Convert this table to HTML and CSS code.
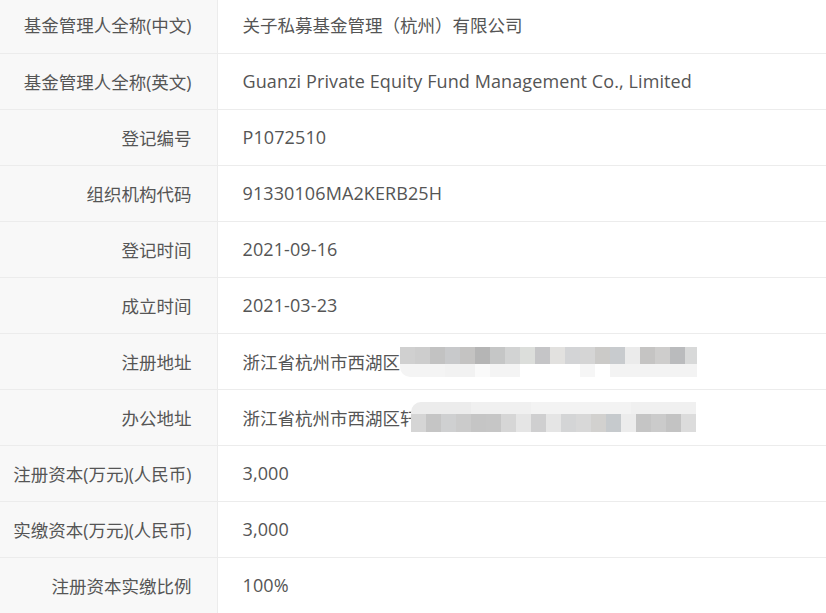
FILE: index.html
```html
<!DOCTYPE html>
<html lang="zh-CN">
<head>
  <meta charset="UTF-8" />
  <meta name="viewport" content="width=device-width, initial-scale=1.0" />
  <title>基金管理人信息</title>
  <link rel="stylesheet" href="styles.css">
</head>
<body>
  <table class="info-table">
    <tbody>
      <tr>
        <th>基金管理人全称(中文)</th>
        <td>关子私募基金管理（杭州）有限公司</td>
      </tr>
      <tr>
        <th>基金管理人全称(英文)</th>
        <td class="latin">Guanzi Private Equity Fund Management Co., Limited</td>
      </tr>
      <tr>
        <th>登记编号</th>
        <td class="latin">P1072510</td>
      </tr>
      <tr>
        <th>组织机构代码</th>
        <td class="latin">91330106MA2KERB25H</td>
      </tr>
      <tr>
        <th>登记时间</th>
        <td class="latin">2021-09-16</td>
      </tr>
      <tr>
        <th>成立时间</th>
        <td class="latin">2021-03-23</td>
      </tr>
      <tr>
        <th>注册地址</th>
        <td>
          <div class="addr">
            <span>浙江省杭州市西湖区</span>
            <span class="mosaic mosaic-a"></span>
          </div>
        </td>
      </tr>
      <tr>
        <th>办公地址</th>
        <td>
          <div class="addr">
            <span>浙江省杭州市西湖区轩</span>
            <span class="mosaic mosaic-b"></span>
          </div>
        </td>
      </tr>
      <tr>
        <th>注册资本(万元)(人民币)</th>
        <td class="latin">3,000</td>
      </tr>
      <tr>
        <th>实缴资本(万元)(人民币)</th>
        <td class="latin">3,000</td>
      </tr>
      <tr>
        <th>注册资本实缴比例</th>
        <td class="latin">100%</td>
      </tr>
    </tbody>
  </table>
</body>
</html>
```

FILE: styles.css
```css
* {
  box-sizing: border-box;
}
body, html {
  margin: 0;
  padding: 0;
  background: #fff;
  overflow: hidden;
  font-family: "Open Sans", "Noto Sans CJK SC", sans-serif;
  font-size: 17.5px;
  color: #555;
}
.info-table {
  width: 100%;
  margin-top: -3px;
  border-collapse: collapse;
}
.info-table tr {
  height: 56px;
  border-bottom: 1px solid #ececec;
}
.info-table th {
  width: 217px;
  padding: 0 25px 0 0;
  text-align: right;
  font-weight: normal;
  background: #f8f8f8;
  border-right: 1px solid #ececec;
  white-space: nowrap;
}
.info-table td {
  padding: 0 0 0 25px;
  text-align: left;
}
.info-table td.latin {
  font-size: 18px;
  letter-spacing: 0.1px;
}
.addr {
  display: flex;
  align-items: center;
}
.mosaic {
  display: block;
  height: 30px;
  filter: blur(0.6px);
}
.mosaic-a {
  width: 297px;
  background:
    linear-gradient(to right,
      #d0d0d0 0 15px, #cdcdcd 15px 30px, #c2c2c2 30px 45px, #c8c9cb 45px 60px,
      #c4c3c2 60px 75px, #b5b5b5 75px 90px, #c5c6c6 90px 105px, #d2d3d3 105px 120px,
      #dcdedb 120px 135px, #c5c5c7 135px 150px, #e2e1df 150px 165px, #d3d4d6 165px 180px,
      #d5d5d5 180px 195px, #cbcac8 195px 210px, #c8cbce 210px 225px, #ebebeb 225px 240px,
      #c5c4c3 240px 255px, #cecdcc 255px 270px, #babbbd 270px 285px, #d8d9d9 285px 300px)
      top / 100% 17px no-repeat,
    linear-gradient(to right,
      #f4f4f4 0 45px, #f2f2f2 45px 75px, #fafafa 75px 90px, #f4f4f4 90px 120px,
      #ffffff 120px 180px, #f6f6f6 180px 195px, #ffffff 195px 210px, #f3f3f3 210px 300px)
      bottom / 100% 13px no-repeat;
  border-radius: 0 0 0 10px;
  margin-bottom: -2px;
}
.mosaic-b {
  width: 285px;
  margin-left: -7px;
  background:
    linear-gradient(to right,
      #ececec 0 60px, #f0f0f0 60px 120px, #f3f3f3 120px 220px, #f0f0f0 220px 285px)
      top / 100% 12px no-repeat,
    linear-gradient(to right,
      #d5d5d5 0 15px, #c5c5c5 15px 30px, #cfd0d1 30px 45px, #cbcbcb 45px 60px,
      #c5c5c5 60px 75px, #c6c6c6 75px 90px, #d6d6d6 90px 105px, #e5e5e5 105px 120px,
      #cfcfd0 120px 135px, #e5e5e5 135px 150px, #d4d5d6 150px 165px, #d8d8d8 165px 180px,
      #d2d1cf 180px 195px, #c6cacd 195px 210px, #ececec 210px 225px, #c5c5c5 225px 240px,
      #cbcbcb 240px 255px, #c3c3c3 255px 270px, #dcdcdc 270px 285px)
      bottom / 100% 18px no-repeat;
  border-radius: 10px 0 0 0;
}
```
